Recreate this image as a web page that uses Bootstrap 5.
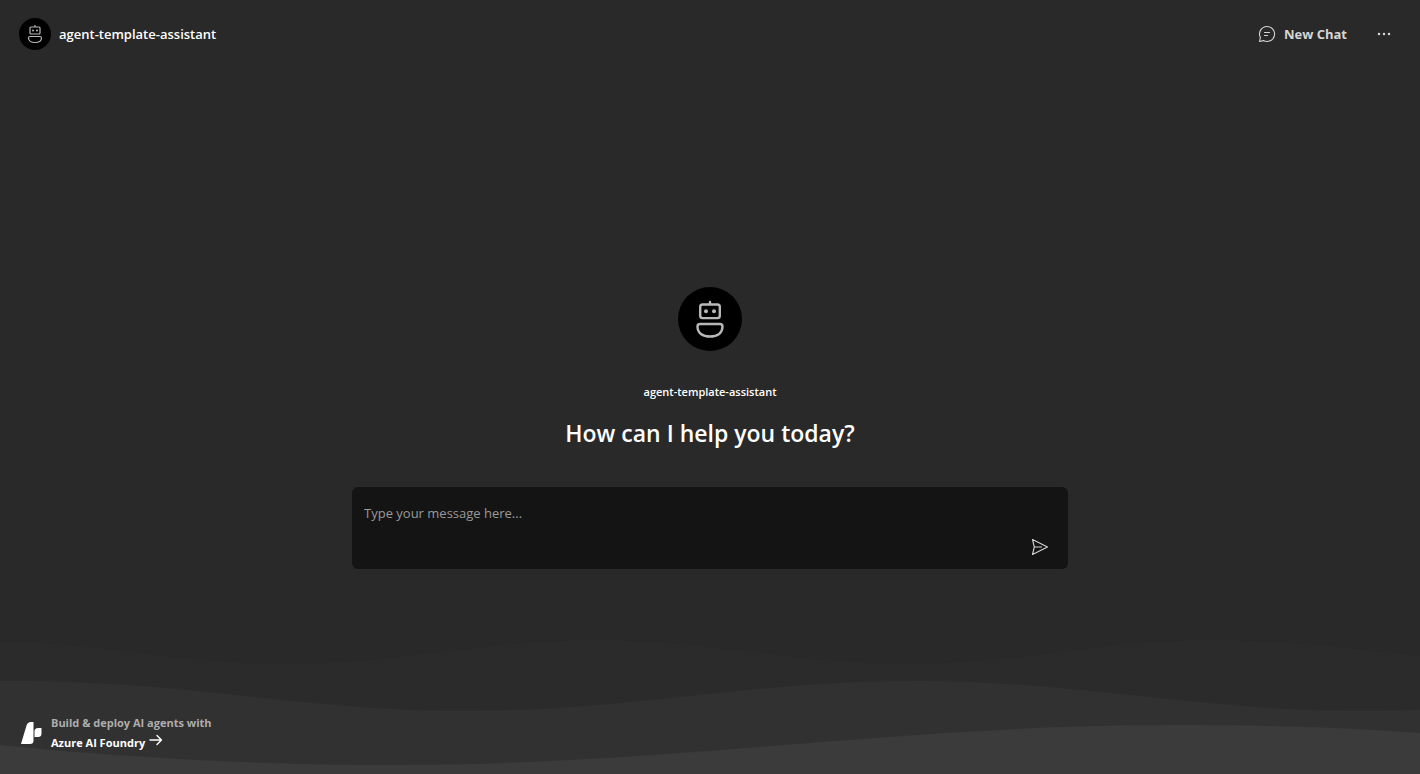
<!DOCTYPE html>
<html lang="en" data-bs-theme="dark">
<head>
<meta charset="utf-8">
<meta name="viewport" content="width=device-width, initial-scale=1">
<title>agent-template-assistant</title>
<link href="https://cdn.jsdelivr.net/npm/bootstrap@5.3.0/dist/css/bootstrap.min.css" rel="stylesheet">
<style>
  body { background: #292929; color: #fff; font-family: "Open Sans", "Noto Sans", sans-serif; font-size: 14px; line-height: 20px; }
  .shell { isolation: isolate; }
  .topbar { padding: 18px 20px 18px 19px; }
  .top-actions { gap: 21px; }
  .agent-name { font-size: 13px; font-weight: 600; }
  .avatar { background: #000; color: #b8b8b8; }
  .avatar-sm { width: 32px; height: 32px; }
  .avatar-lg { width: 64px; height: 64px; }
  .ghost { color: #d6d6d6; font-size: 13px; font-weight: 700; line-height: 20px; }
  .hero { padding-top: 74px; }
  .hero-name { font-size: 11px; line-height: 16px; font-weight: 600; margin-top: 33px; }
  .hero-title { font-size: 23px; line-height: 32px; font-weight: 600; margin: 17px 0 38px; }
  .composer { width: 716px; max-width: 92%; background: #141414; border-radius: 6px; padding: 16px 12px 6px; }
  .composer textarea { background: none; border: 0; outline: 0; color: #fff; height: 20px; resize: none; font-size: 13px; line-height: 20px; }
  .composer textarea::placeholder { color: #999; opacity: 1; }
  .send { width: 32px; height: 32px; color: #d6d6d6; }
  .waves { height: 140px; z-index: -1; }
  .promo { color: #adadad; font-size: 11px; font-weight: 700; line-height: 20px; padding: 0 20px 21px; }
  .promo svg { flex: none; }
</style>
</head>
<body>
<div class="shell position-relative d-flex flex-column min-vh-100">
  <svg class="waves position-absolute bottom-0 start-0 w-100" viewBox="0 0 1420 140" preserveAspectRatio="none" aria-hidden="true">
    <path fill="#2b2b2b" d="M0 7C110 10 180 30 285 30C400 30 480 6 595 6C710 6 800 30 905 30C1020 30 1100 6 1213 6C1290 6 1350 14 1420 22V140H0Z"/>
    <path fill="#313131" d="M0 47C180 45 300 77 466 77C630 77 750 47 914 47C1080 47 1200 77 1358 77Q1390 77 1420 76V140H0Z"/>
    <path fill="#3b3b3b" d="M0 111C130 124 260 131 394 131C670 131 900 91 1172 91C1260 91 1340 93 1420 99V140H0Z"/>
  </svg>

  <header class="topbar d-flex align-items-center justify-content-between">
    <div class="d-flex align-items-center gap-2">
      <span class="avatar avatar-sm rounded-circle d-flex align-items-center justify-content-center">
        <svg width="20" height="20" viewBox="0 0 20 20" fill="none" stroke="currentColor" stroke-width="1.200" aria-hidden="true"><path d="M10 1v2M6 3h8a1 1 0 0 1 1 1v5a1 1 0 0 1-1 1H6a1 1 0 0 1-1-1V4a1 1 0 0 1 1-1ZM5 12.500h10a1.500 1.500 0 0 1 1.500 1.500c0 3-2.500 4.500-6.500 4.500S3.500 17 3.500 14A1.500 1.500 0 0 1 5 12.500Z"/><circle cx="8" cy="6.500" r="1" fill="currentColor" stroke="none"/><circle cx="12" cy="6.500" r="1" fill="currentColor" stroke="none"/></svg>
      </span>
      <span class="agent-name">agent-template-assistant</span>
    </div>
    <div class="top-actions d-flex align-items-center">
      <button type="button" class="ghost btn border-0 p-0 d-flex align-items-center gap-2">
        <svg width="18" height="18" viewBox="0 0 18 18" fill="none" stroke="currentColor" stroke-width="1.100" stroke-linecap="round" stroke-linejoin="round" aria-hidden="true"><path d="M9 1.500a7.500 7.500 0 1 1-3.500 14.100L1.500 16.500l.9-4A7.500 7.500 0 0 1 9 1.500ZM6.500 7.500h5M6.500 10.500h3"/></svg>
        New Chat
      </button>
      <button type="button" class="ghost btn border-0 p-0 send d-flex align-items-center justify-content-center" aria-label="More options">
        <svg width="20" height="20" viewBox="0 0 20 20" fill="currentColor" aria-hidden="true"><circle cx="5" cy="10" r="1.250"/><circle cx="10" cy="10" r="1.250"/><circle cx="15" cy="10" r="1.250"/></svg>
      </button>
    </div>
  </header>

  <main class="hero flex-grow-1 d-flex flex-column align-items-center justify-content-center">
    <span class="avatar avatar-lg rounded-circle d-flex align-items-center justify-content-center">
      <svg width="40" height="40" viewBox="0 0 40 40" fill="none" stroke="currentColor" stroke-width="2.400" stroke-linecap="round" aria-hidden="true"><path d="M20 3v2M12.500 5.500h15a2.300 2.300 0 0 1 2.300 2.300v9a2.300 2.300 0 0 1-2.300 2.300h-15a2.300 2.300 0 0 1-2.300-2.300v-9a2.300 2.300 0 0 1 2.300-2.300ZM10 25h20a2.500 2.500 0 0 1 2.500 2.500c0 6.500-5 10-12.500 10s-12.500-3.500-12.500-10A2.500 2.500 0 0 1 10 25Z"/><circle cx="16" cy="12.300" r="2" fill="currentColor" stroke="none"/><circle cx="24" cy="12.300" r="2" fill="currentColor" stroke="none"/></svg>
    </span>
    <span class="hero-name">agent-template-assistant</span>
    <h1 class="hero-title text-center">How can I help you today?</h1>
    <form class="composer d-flex flex-column gap-2">
      <textarea class="w-100 p-0 overflow-hidden" aria-label="Message" placeholder="Type your message here..."></textarea>
      <button type="button" class="send btn border-0 p-0 align-self-end d-flex align-items-center justify-content-center" aria-label="Send">
        <svg width="20" height="20" viewBox="0 0 20 20" fill="none" stroke="currentColor" stroke-width="1.100" stroke-linejoin="round" aria-hidden="true"><path d="M2.500 2.500 17.500 10l-15 7.500L4.300 10ZM4.300 10H12"/></svg>
      </button>
    </form>
  </main>

  <footer class="promo d-flex align-items-center gap-2">
    <svg width="23" height="24" viewBox="0 0 23 24" fill="#fff" aria-hidden="true"><path d="M13.500 1v18.500a3.500 3.500 0 0 1-3.500 3.500H1L6.500 4.500Q7.500 1 11 1ZM14.500 10.500a3.500 3.500 0 0 1 3.500-3.500h3.500v5.500a3.500 3.500 0 0 1-3.500 3.500h-3.500Z"/></svg>
    <div>
      <div>Build &amp; deploy AI agents with</div>
      <a href="#" class="text-white text-decoration-none d-flex align-items-start gap-1">Azure AI Foundry
        <svg width="14" height="14" viewBox="0 0 14 14" fill="none" stroke="currentColor" stroke-width="1.400" stroke-linecap="round" stroke-linejoin="round" aria-hidden="true"><path d="M1 7h11.500M8 2.500 12.500 7 8 11.500"/></svg>
      </a>
    </div>
  </footer>
</div>
<script src="https://cdn.jsdelivr.net/npm/bootstrap@5.3.0/dist/js/bootstrap.bundle.min.js"></script>
</body>
</html>
